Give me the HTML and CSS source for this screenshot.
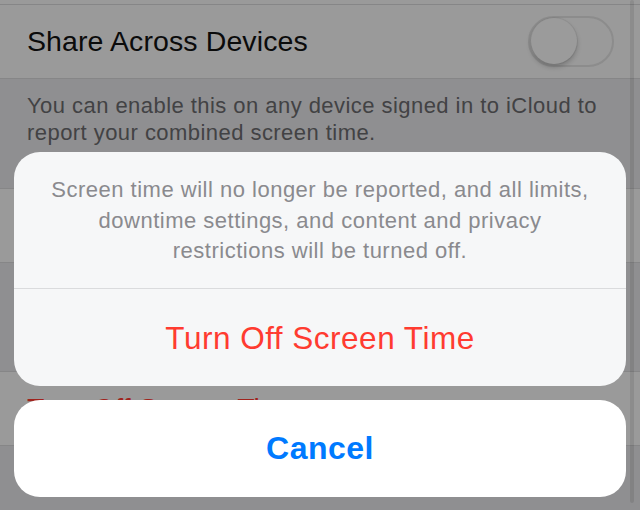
FILE: index.html
```html
<!DOCTYPE html>
<html lang="en">
<head>
<meta charset="utf-8">
<title>Turn Off Screen Time</title>
<link rel="stylesheet" href="styles.css">
</head>
<body>
<div class="screen">
  <div class="settings">
    <div class="cell cell-top"></div>
    <div class="cell cell-row">
      <span class="cell-label">Share Across Devices</span>
      <span class="toggle"><span class="knob"></span></span>
    </div>
    <div class="group-gap footer">
      You can enable this on any device signed in to iCloud to report your combined screen time.
    </div>
    <div class="cell cell-row"></div>
    <div class="group-gap gap-mid"></div>
    <div class="cell cell-row"><span class="cell-label destructive">Turn Off Screen Time</span></div>
    <div class="group-gap gap-end"></div>
  </div>

  <div class="scroll-indicator"></div>

  <div class="sheet">
    <div class="sheet-group">
      <p class="sheet-message">Screen time will no longer be reported, and all limits, downtime settings, and content and privacy restrictions will be turned off.</p>
      <div class="sheet-action sheet-destructive">Turn Off Screen Time</div>
    </div>
    <div class="sheet-group sheet-cancel-group">
      <div class="sheet-action sheet-cancel">Cancel</div>
    </div>
  </div>
</div>
</body>
</html>
```

FILE: styles.css
```css
* { box-sizing: border-box; }

html, body {
  margin: 0;
  padding: 0;
  background: #8f8f91;
}

body {
  font-family: "Liberation Sans", Arial, sans-serif;
  width: 640px;
  height: 510px;
  overflow: hidden;
}

.screen {
  position: relative;
  width: 640px;
  height: 510px;
  overflow: hidden;
}

.settings {
  display: flex;
  flex-direction: column;
}

.cell {
  background: #9a9a9a;
  border-bottom: 1px solid #868687;
}

.cell-top {
  height: 5px;
}

.cell-row {
  height: 74px;
  display: flex;
  align-items: center;
  justify-content: space-between;
  padding: 0 26px 0 27px;
}

.cell-label {
  font-size: 28.5px;
  letter-spacing: 0.1px;
  color: #0b0b0b;
  white-space: nowrap;
}

.destructive {
  color: #a0231d;
}

.toggle {
  position: relative;
  width: 86px;
  height: 51px;
  border-radius: 26px;
  border: 2px solid #8c8c8c;
  background: #9a9a9a;
  flex: none;
}

.knob {
  position: absolute;
  left: 1px;
  top: 0px;
  width: 46px;
  height: 46px;
  border-radius: 50%;
  background: #9b9b9b;
  box-shadow: 0 3px 5px rgba(0, 0, 0, 0.22), 0 0 0 1px rgba(0, 0, 0, 0.05);
}

.group-gap {
  background: #8f8f91;
  border-bottom: 1px solid #868687;
}

.footer {
  height: 110px;
  padding: 13px 20px 0 27px;
  font-size: 22px;
  letter-spacing: 0.45px;
  line-height: 27px;
  color: #424244;
}

.gap-mid {
  height: 109px;
}

.gap-end {
  height: 70px;
  border-bottom: none;
}

.scroll-indicator {
  position: absolute;
  top: 0;
  right: 6px;
  width: 4px;
  height: 503px;
  border-radius: 2px;
  background: rgba(0, 0, 0, 0.09);
}

.sheet {
  position: absolute;
  left: 14px;
  top: 152px;
  width: 612px;
  display: flex;
  flex-direction: column;
  gap: 14px;
}

.sheet-group {
  background: #f6f7f8;
  border-radius: 26px;
  overflow: hidden;
}

.sheet-cancel-group {
  background: #ffffff;
}

.sheet-message {
  margin: 0;
  padding: 23px 34px 21px;
  text-align: center;
  font-size: 22px;
  letter-spacing: 0.5px;
  line-height: 30.5px;
  color: #8a8a8e;
  border-bottom: 1px solid #dadbdd;
}

.sheet-action {
  height: 97px;
  display: flex;
  align-items: center;
  justify-content: center;
  white-space: nowrap;
}

.sheet-destructive {
  font-size: 31.5px;
  letter-spacing: 0.5px;
  color: #ff3b30;
  padding-top: 3px;
}

.sheet-cancel {
  font-size: 32px;
  letter-spacing: 0.5px;
  font-weight: bold;
  color: #007aff;
}
```
